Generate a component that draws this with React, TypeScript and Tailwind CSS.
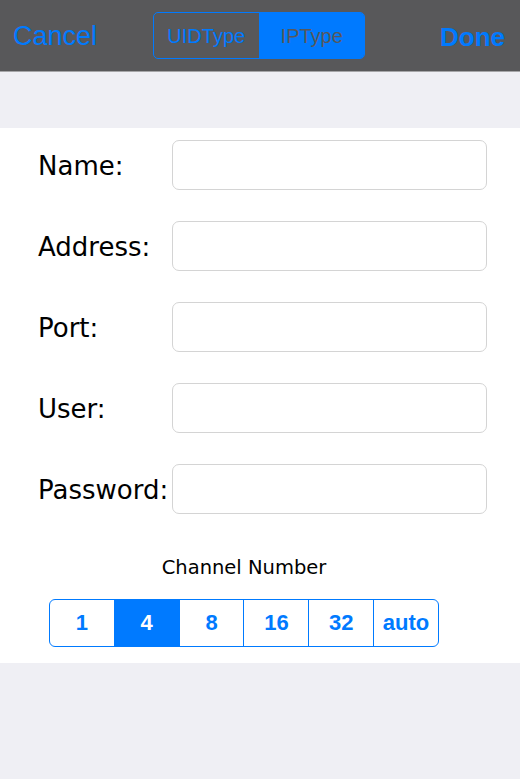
import { useState } from "react";

const fields = ["Name:", "Address:", "Port:", "User:", "Password:"];
const channels = ["1", "4", "8", "16", "32", "auto"];

export default function App() {
  const [type, setType] = useState("IP");
  const [channel, setChannel] = useState("4");

  return (
    <div className="w-[520px] h-[779px] bg-[#efeff4] font-['Liberation_Sans',Arial,sans-serif]">
      {/* nav bar */}
      <div className="h-[72px] bg-[#58585a] border-b border-[#a6a6a8] grid grid-cols-[1fr_auto_1fr] items-center pl-[13px] pr-[15px]">
        <button className="justify-self-start text-[27px] text-[#007aff] leading-none pt-[2px]">Cancel</button>
        <div className="flex h-[47px] w-[212px] border-[1.5px] border-[#007aff] rounded-[5px] overflow-hidden">
          <button
            onClick={() => setType("UID")}
            className={`flex-1 text-[20px] leading-none ${
              type === "UID" ? "bg-[#007aff] text-[#58585a]" : "text-[#007aff]"
            }`}
          >
            UIDType
          </button>
          <button
            onClick={() => setType("IP")}
            className={`flex-1 text-[20px] leading-none border-l-[1.5px] border-[#007aff] ${
              type === "IP" ? "bg-[#007aff] text-[#58585a]" : "text-[#007aff]"
            }`}
          >
            IPType
          </button>
        </div>
        <button className="justify-self-end text-[26px] font-bold text-[#007aff] leading-none pt-[2px]">Done</button>
      </div>

      <div className="h-[56px]" />

      {/* form */}
      <div className="bg-white pt-[12px] pb-[16px]">
        <div className="flex flex-col gap-[31px] pl-[38px] pr-[33px]">
          {fields.map((f) => (
            <div key={f} className="flex items-center h-[50px]">
              <label className="w-[134px] shrink-0 text-[26px] text-black font-['DejaVu_Sans',Verdana,sans-serif] pt-[2px]">
                {f}
              </label>
              <input
                type={f === "Password:" ? "password" : "text"}
                className="flex-1 h-[50px] border border-[#d4d4d4] rounded-[7px] px-3 text-[20px] outline-none"
              />
            </div>
          ))}
        </div>

        <p className="mt-[43px] text-center text-[19.5px] leading-[22px] text-black font-['DejaVu_Sans',Verdana,sans-serif] pr-[32px]">
          Channel Number
        </p>

        <div className="mt-[20px] ml-[49px] flex h-[48px] w-[390px] border-[1.5px] border-[#007aff] rounded-[6px] overflow-hidden">
          {channels.map((c, i) => (
            <button
              key={c}
              onClick={() => setChannel(c)}
              className={`flex-1 text-[22px] font-bold leading-none ${
                i > 0 ? "border-l-[1.5px] border-[#007aff]" : ""
              } ${channel === c ? "bg-[#007aff] text-white" : "text-[#007aff]"}`}
            >
              {c}
            </button>
          ))}
        </div>
      </div>
    </div>
  );
}
